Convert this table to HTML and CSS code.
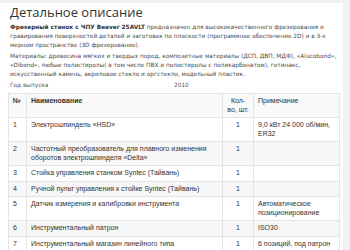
FILE: index.html
```html
<!DOCTYPE html>
<html lang="ru">
<head>
<meta charset="utf-8">
<link rel="stylesheet" href="styles.css">
</head>
<body>
<div class="card">
  <div class="desc">
    <h2 class="title">Детальное описание</h2>
    <p class="text"><b>Фрезерный станок с ЧПУ Beaver 25AVLT</b> предназначен для высококачественного фрезерования и<br>гравирования поверхностей деталей и заготовок по плоскости (программное обеспечение 2D) и в 3-х<br>мерном пространстве (3D фрезерование).</p>
    <p class="text">Материалы: древесина мягких и твердых пород, композитные материалы (ДСП, ДВП, МДФ), «Alucobond»,<br>«Dibond», любые полистиролы( в том числе ПВХ и полистиролы с поликарбонатом), гетинакс,<br>искусственный камень, акриловое стекло и оргстекло, модельный пластик.</p>
    <div class="year"><span class="year-label">Год выпуска</span><span>2010</span></div>
  </div>
  <table class="spec">
    <thead>
      <tr><th class="c-num b">№</th><th class="c-name b">Наименование</th><th class="c-qty">Кол-во, шт.</th><th class="c-note">Примечание</th></tr>
    </thead>
    <tbody>
      <tr><td>1</td><td>Электрошпиндель «HSD»</td><td class="c-qty">1</td><td>9,0 кВт 24 000 об/мин, ER32</td></tr>
      <tr><td>2</td><td>Частотный преобразователь для плавного изменения оборотов электрошпинделя «Delta»</td><td class="c-qty">1</td><td></td></tr>
      <tr><td>3</td><td>Стойка управления станком Syntec (Тайвань)</td><td class="c-qty">1</td><td></td></tr>
      <tr><td>4</td><td>Ручной пульт управления к стойке Syntec (Тайвань)</td><td class="c-qty">1</td><td></td></tr>
      <tr><td>5</td><td>Датчик измерения и калибровки инструмента</td><td class="c-qty">1</td><td>Автоматическое позиционирование</td></tr>
      <tr><td>6</td><td>Инструментальный патрон</td><td class="c-qty">1</td><td>ISO30</td></tr>
      <tr><td>7</td><td>Инструментальный магазин линейного типа</td><td class="c-qty">1</td><td>6 позиций, под патрон</td></tr>
    </tbody>
  </table>
</div>
</body>
</html>
```

FILE: styles.css
```css
html, body {
  margin: 0;
  padding: 0;
}
body {
  background: #f1f1f1;
  height: 250px;
  overflow: hidden;
}
.card {
  background: #fff;
  margin: 3px 7px 0 0;
  padding: 0 3px 0 8px;
  height: 300px;
}
.desc {
  padding-left: 2px;
}
.title {
  margin: 0;
  padding-top: 1px;
  font-family: "Open Sans", sans-serif;
  font-weight: 400;
  font-size: 13px;
  line-height: 17px;
  color: #333;
}
.text {
  margin: 2px 0 0;
  font-family: "DejaVu Sans", sans-serif;
  font-size: 5.8px;
  line-height: 9px;
  color: #4a4a4a;
}
.text b {
  font-weight: 700;
  color: #333;
}
.year {
  display: flex;
  margin-top: 2px;
  font-family: "DejaVu Sans", sans-serif;
  font-size: 5.8px;
  line-height: 9px;
  color: #555;
}
.year-label {
  width: 164px;
}
.spec {
  margin-top: 3px;
  width: 100%;
  border-collapse: collapse;
  font-family: "Liberation Sans", Arial, sans-serif;
  font-size: 7px;
  line-height: 8.5px;
  color: #333;
}
.spec th, .spec td {
  border: 1px solid #e4e4e4;
  padding: 3px 4px;
  vertical-align: top;
  text-align: left;
}
.spec th {
  font-weight: 400;
}
.spec th.b {
  font-weight: 700;
}
.spec tr:nth-child(even) td {
  background: #f7f7f7;
}
.spec thead th {
  background: #f9f9f9;
}
.c-num { width: 9px; }
.c-qty { width: 22px; text-align: center !important; }
.c-note { width: 77px; }
```
